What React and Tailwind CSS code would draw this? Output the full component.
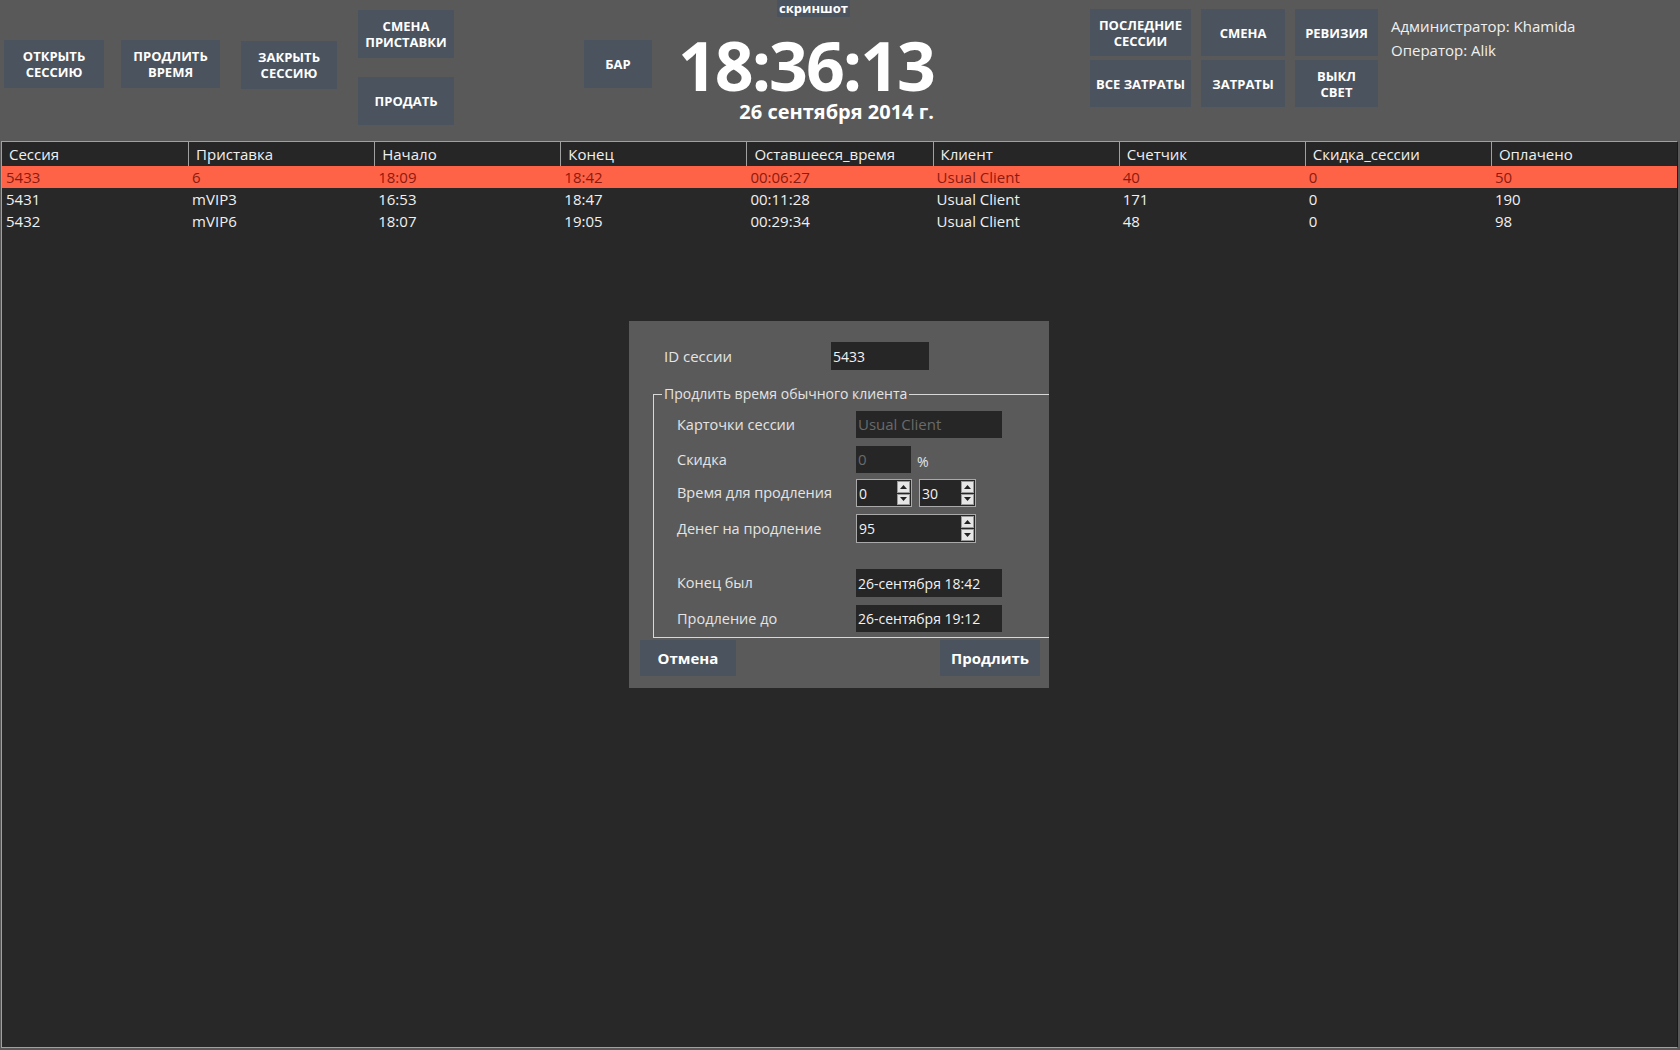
import React from "react";

const F = { fontFamily: '"Open Sans", "Noto Sans", sans-serif' };

function TopBtn({ className = "", children }) {
  return (
    <div
      className={
        "flex items-center justify-center text-center bg-[#4b535e] text-white font-bold text-[13px] leading-[16px] " +
        className
      }
    >
      {children}
    </div>
  );
}

const cols = [
  "Сессия",
  "Приставка",
  "Начало",
  "Конец",
  "Оставшееся_время",
  "Клиент",
  "Счетчик",
  "Скидка_сессии",
  "Оплачено",
];

const rows = [
  ["5433", "6", "18:09", "18:42", "00:06:27", "Usual Client", "40", "0", "50"],
  ["5431", "mVIP3", "16:53", "18:47", "00:11:28", "Usual Client", "171", "0", "190"],
  ["5432", "mVIP6", "18:07", "19:05", "00:29:34", "Usual Client", "48", "0", "98"],
];

function Arrow({ up }) {
  return (
    <div className="flex-1 flex items-center justify-center bg-[#e6e6e6] border border-[#9a9a9a]">
      <svg width="7" height="4" viewBox="0 0 7 4">
        {up ? (
          <polygon points="3.5,0 7,4 0,4" fill="#222" />
        ) : (
          <polygon points="0,0 7,0 3.5,4" fill="#222" />
        )}
      </svg>
    </div>
  );
}

function Spinner({ value, className = "" }) {
  return (
    <div
      className={
        "flex border border-[#a9a9a9] bg-[#262626] text-[#f2f2f2] text-[14px] " +
        className
      }
    >
      <div className="flex-1 flex items-center pl-[2px]">{value}</div>
      <div className="w-[15px] flex flex-col gap-[1px] p-[1px]">
        <Arrow up />
        <Arrow />
      </div>
    </div>
  );
}

function DarkInput({ value, className = "", dim = false }) {
  return (
    <div
      className={
        "flex items-center pl-[2px] bg-[#262626] " +
        (dim ? "text-[#6a6a6a] text-[15px] " : "text-[#f2f2f2] text-[14px] ") +
        className
      }
    >
      {value}
    </div>
  );
}

function Row({ label, children, className = "" }) {
  return (
    <div className={"flex items-center " + className}>
      <div className="w-[179px] text-[14.5px] text-[#e4e4e4]">{label}</div>
      {children}
    </div>
  );
}

export default function App() {
  return (
    <div
      style={F}
      className="w-[1680px] h-[1050px] bg-[#595959] flex flex-col overflow-hidden relative"
    >
      {/* Top bar */}
      <div className="h-[141px] flex items-start shrink-0">
        <TopBtn className="ml-[4px] mt-[40px] w-[100px] h-[48px]">
          ОТКРЫТЬ
          <br />
          СЕССИЮ
        </TopBtn>
        <TopBtn className="ml-[17px] mt-[40px] w-[99px] h-[48px]">
          ПРОДЛИТЬ
          <br />
          ВРЕМЯ
        </TopBtn>
        <TopBtn className="ml-[21px] mt-[41px] w-[96px] h-[48px]">
          ЗАКРЫТЬ
          <br />
          СЕССИЮ
        </TopBtn>
        <div className="ml-[21px] flex flex-col">
          <TopBtn className="mt-[10px] w-[96px] h-[48px]">
            СМЕНА
            <br />
            ПРИСТАВКИ
          </TopBtn>
          <TopBtn className="mt-[19px] w-[96px] h-[48px]">ПРОДАТЬ</TopBtn>
        </div>
        <TopBtn className="ml-[130px] mt-[40px] w-[68px] h-[48px]">БАР</TopBtn>
        <div className="ml-[32px] w-[250px] flex flex-col items-end">
          <TopBtn className="self-start ml-[93px] w-[73px] h-[17px] leading-[15px] items-start">
            скриншот
          </TopBtn>
          <div className="text-[68px] font-bold text-white leading-[58px] tracking-[-2px] mt-[19px]">
            18:36:13
          </div>
          <div className="text-[20px] font-bold text-white leading-[22px] mt-[7px]">
            26 сентября 2014 г.
          </div>
        </div>
        <div className="ml-[156px] mt-[9px] grid grid-cols-[101px_84px_83px] gap-x-[10px] gap-y-[4px] auto-rows-[47px]">
          <TopBtn>
            ПОСЛЕДНИЕ
            <br />
            СЕССИИ
          </TopBtn>
          <TopBtn>СМЕНА</TopBtn>
          <TopBtn>РЕВИЗИЯ</TopBtn>
          <TopBtn>ВСЕ ЗАТРАТЫ</TopBtn>
          <TopBtn>ЗАТРАТЫ</TopBtn>
          <TopBtn>
            ВЫКЛ
            <br />
            СВЕТ
          </TopBtn>
        </div>
        <div className="ml-[13px] mt-[14px] text-[15px] text-[#f0f0f0] leading-[24px]">
          <div>Администратор: Khamida</div>
          <div>Оператор: Alik</div>
        </div>
      </div>

      {/* Table area */}
      <div className="flex-1 ml-[1px] mr-[2px] mb-[2px] bg-[#282828] border-t border-l border-[#a0a0a0] border-r-[#1a1a1a] border-b border-r">
        <div className="grid grid-cols-9 h-[24px] bg-[#262626] text-[15px] text-[#f0f0f0]">
          {cols.map((c, i) => (
            <div
              key={c}
              className={
                "flex items-center pl-[7px] " +
                (i > 0 ? "border-l border-[#a0a0a0]" : "")
              }
            >
              {c}
            </div>
          ))}
        </div>
        {rows.map((r, ri) => (
          <div
            key={ri}
            className={
              "grid grid-cols-9 h-[22px] text-[15px] " +
              (ri === 0 ? "bg-[#ff6347] text-[#8b1a10]" : "text-[#f0f0f0]")
            }
          >
            {r.map((v, i) => (
              <div key={i} className="flex items-center pl-[4px]">
                {v}
              </div>
            ))}
          </div>
        ))}
      </div>

      {/* Dialog */}
      <div className="absolute left-[629px] top-[321px] w-[420px] h-[367px] bg-[#5a5a5a] overflow-hidden">
        <div className="flex items-center mt-[21px] ml-[35px]">
          <div className="w-[167px] text-[15px] text-[#e4e4e4]">ID сессии</div>
          <DarkInput value="5433" className="w-[98px] h-[28px]" />
        </div>
        <div className="relative ml-[24px] mt-[24px] w-[420px] h-[244px] border-l border-t border-b border-[#d8d8d8]">
          <div className="absolute -top-[12px] left-[8px] px-[2px] bg-[#5a5a5a] text-[14px] text-[#e4e4e4] leading-[22px]">
            Продлить время обычного клиента
          </div>
          <div className="ml-[23px] pt-[16px] flex flex-col">
            <Row label="Карточки сессии">
              <DarkInput value="Usual Client" dim className="w-[146px] h-[27px]" />
            </Row>
            <Row label="Скидка" className="mt-[8px]">
              <DarkInput value="0" dim className="w-[55px] h-[27px]" />
              <span className="ml-[6px] mt-[4px] text-[14px] text-[#e4e4e4]">%</span>
            </Row>
            <Row label="Время для продления" className="mt-[6px]">
              <Spinner value="0" className="w-[56px] h-[28px]" />
              <Spinner value="30" className="ml-[7px] w-[57px] h-[28px]" />
            </Row>
            <Row label="Денег на продление" className="mt-[7px]">
              <Spinner value="95" className="w-[120px] h-[29px]" />
            </Row>
            <Row label="Конец был" className="mt-[26px]">
              <DarkInput value="26-сентября 18:42" className="w-[146px] h-[28px]" />
            </Row>
            <Row label="Продление до" className="mt-[8px]">
              <DarkInput value="26-сентября 19:12" className="w-[146px] h-[27px]" />
            </Row>
          </div>
        </div>
        <div className="flex justify-between mt-[2px] ml-[11px] mr-[9px]">
          <div className="w-[96px] h-[36px] bg-[#4b535e] flex items-center justify-center text-white font-bold text-[15px]">
            Отмена
          </div>
          <div className="w-[100px] h-[36px] bg-[#4b535e] flex items-center justify-center text-white font-bold text-[15px]">
            Продлить
          </div>
        </div>
      </div>
    </div>
  );
}
